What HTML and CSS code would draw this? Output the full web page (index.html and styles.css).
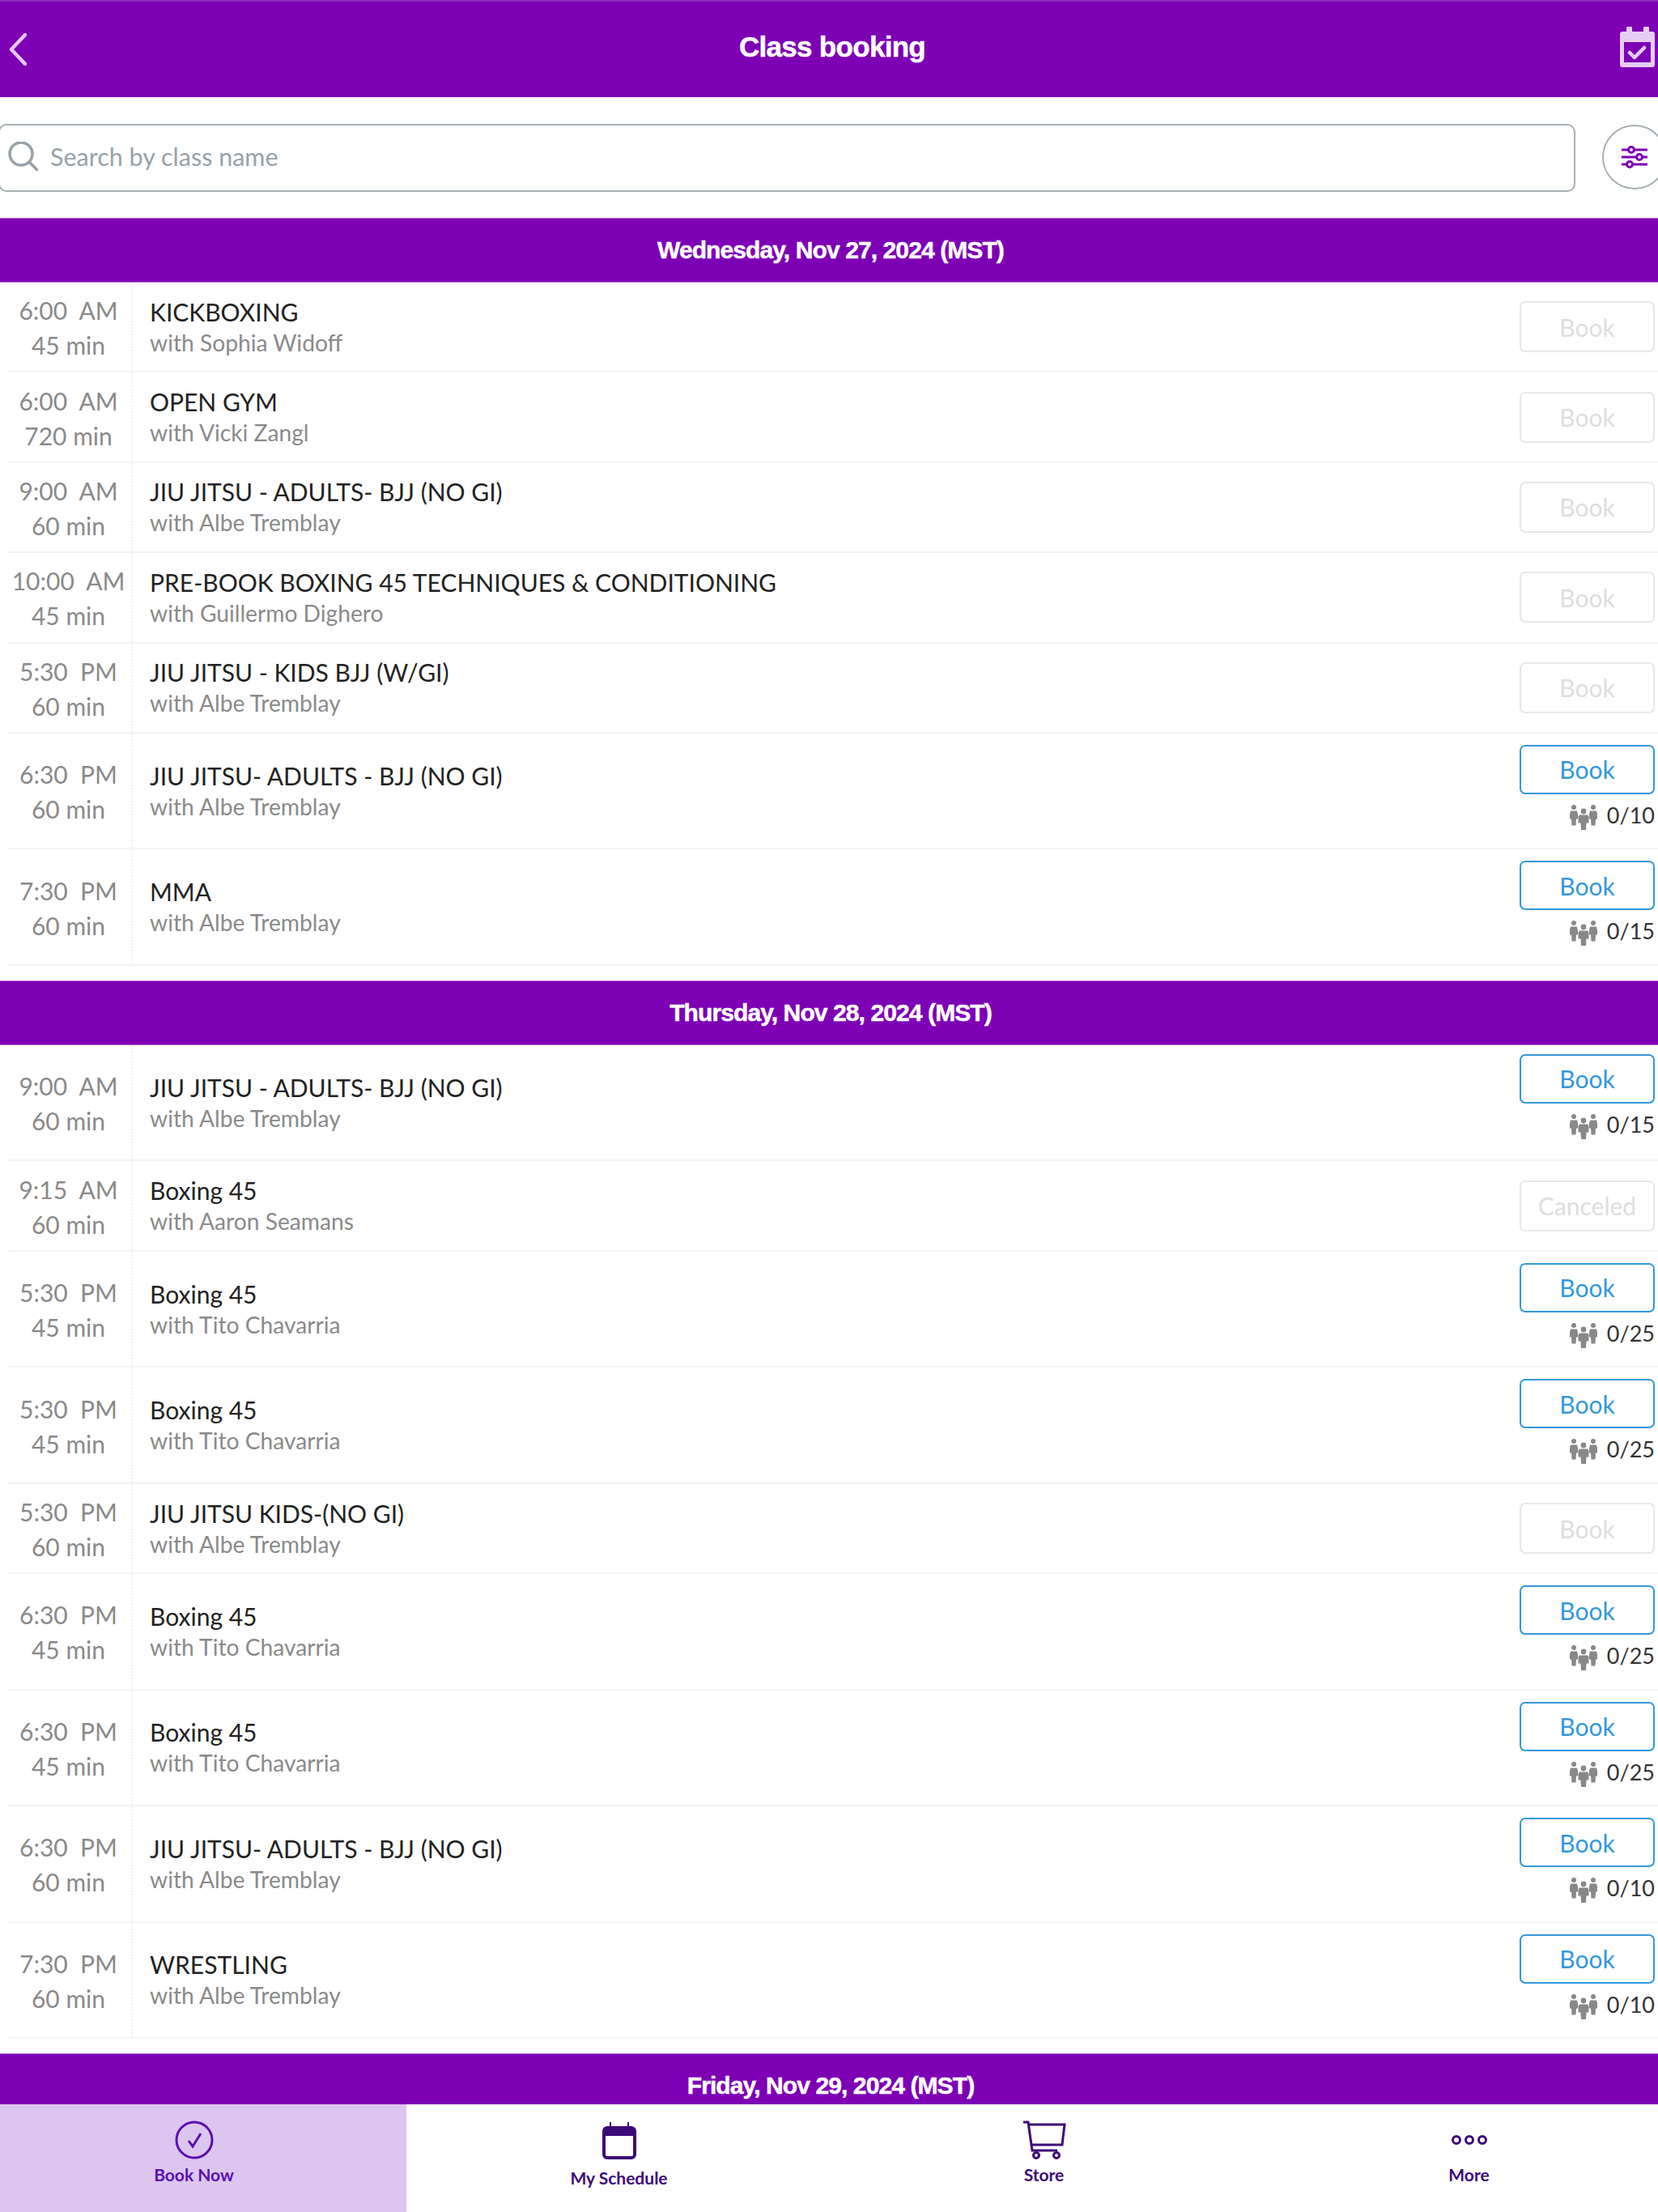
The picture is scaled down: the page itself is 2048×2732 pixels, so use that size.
FILE: index.html
```html
<!DOCTYPE html>
<html lang="en">
<head>
    <meta charset="UTF-8">
    <title>Class booking</title>
    <link rel="stylesheet" href="styles.css">
</head>
<body>
<svg class="defs" width="0" height="0">
    <symbol id="people" viewBox="0 0 34 31">
        <circle cx="5" cy="3" r="3"/><circle cx="29" cy="3" r="3"/><circle cx="17" cy="8" r="3.4"/>
        <path d="M1 7.500h8l1 4v6H8l-.5 8h-5l-.5-8H0v-6z"/>
        <path d="M25 7.500h8l1 4v6h-2l-.5 8h-5l-.5-8h-2v-6z"/>
        <path d="M12 12.500h10l1.500 2v8h-3L20 31h-6l-.5-8.500h-3v-8z"/>
    </symbol>
</svg>

<header class="topbar">
    <svg class="back-icon" width="22" height="40" viewBox="0 0 22 40"><path d="M20 2 3 20l17 18"/></svg>
    <h1>Class booking</h1>
    <svg class="cal-check" width="44" height="50" viewBox="0 0 44 50">
        <path fill-rule="evenodd" d="M9 0h5a1 1 0 0 1 1 1v5h14V1a1 1 0 0 1 1-1h5a1 1 0 0 1 1 1v5h4a3 3 0 0 1 3 3v38a3 3 0 0 1-3 3H3a3 3 0 0 1-3-3V9a3 3 0 0 1 3-3h5V1a1 1 0 0 1 1-1zM5 19v25h33V19z"/>
        <path class="tick" d="m12 32 6 6 12-12"/>
    </svg>
</header>

<div class="search-row">
    <div class="search-box">
        <svg width="38" height="36" viewBox="0 0 38 36"><circle cx="17" cy="15" r="14"/><path d="m27 25 10 10"/></svg>
        <span>Search by class name</span>
    </div>
    <div class="filter-btn">
        <svg width="32" height="28" viewBox="0 0 32 28">
            <path d="M0 5h8m8 0h16M0 14h18m8 0h6M0 23h6m8 0h18"/>
            <circle cx="12" cy="5" r="3.500"/><circle cx="22" cy="14" r="3.500"/><circle cx="10" cy="23" r="3.500"/>
        </svg>
    </div>
</div>

<main class="list">
    <h2 class="day">Wednesday, Nov 27, 2024 (MST)</h2>

    <div class="row">
        <div class="time"><span>6:00&nbsp; AM</span><span>45 min</span></div>
        <div class="info"><div class="name">KICKBOXING</div><div class="coach">with Sophia Widoff</div></div>
        <div class="action"><span class="btn off">Book</span></div>
    </div>
    <div class="row">
        <div class="time"><span>6:00&nbsp; AM</span><span>720 min</span></div>
        <div class="info"><div class="name">OPEN GYM</div><div class="coach">with Vicki Zangl</div></div>
        <div class="action"><span class="btn off">Book</span></div>
    </div>
    <div class="row">
        <div class="time"><span>9:00&nbsp; AM</span><span>60 min</span></div>
        <div class="info"><div class="name">JIU JITSU - ADULTS- BJJ (NO GI)</div><div class="coach">with Albe Tremblay</div></div>
        <div class="action"><span class="btn off">Book</span></div>
    </div>
    <div class="row">
        <div class="time"><span>10:00&nbsp; AM</span><span>45 min</span></div>
        <div class="info"><div class="name">PRE-BOOK BOXING 45 TECHNIQUES &amp; CONDITIONING</div><div class="coach">with Guillermo Dighero</div></div>
        <div class="action"><span class="btn off">Book</span></div>
    </div>
    <div class="row">
        <div class="time"><span>5:30&nbsp; PM</span><span>60 min</span></div>
        <div class="info"><div class="name">JIU JITSU - KIDS BJJ (W/GI)</div><div class="coach">with Albe Tremblay</div></div>
        <div class="action"><span class="btn off">Book</span></div>
    </div>
    <div class="row tall">
        <div class="time"><span>6:30&nbsp; PM</span><span>60 min</span></div>
        <div class="info"><div class="name">JIU JITSU- ADULTS - BJJ (NO GI)</div><div class="coach">with Albe Tremblay</div></div>
        <div class="action"><span class="btn">Book</span><div class="spots"><svg width="34" height="31"><use href="#people"/></svg>0/10</div></div>
    </div>
    <div class="row tall">
        <div class="time"><span>7:30&nbsp; PM</span><span>60 min</span></div>
        <div class="info"><div class="name">MMA</div><div class="coach">with Albe Tremblay</div></div>
        <div class="action"><span class="btn">Book</span><div class="spots"><svg width="34" height="31"><use href="#people"/></svg>0/15</div></div>
    </div>

    <h2 class="day">Thursday, Nov 28, 2024 (MST)</h2>

    <div class="row tall">
        <div class="time"><span>9:00&nbsp; AM</span><span>60 min</span></div>
        <div class="info"><div class="name">JIU JITSU - ADULTS- BJJ (NO GI)</div><div class="coach">with Albe Tremblay</div></div>
        <div class="action"><span class="btn">Book</span><div class="spots"><svg width="34" height="31"><use href="#people"/></svg>0/15</div></div>
    </div>
    <div class="row">
        <div class="time"><span>9:15&nbsp; AM</span><span>60 min</span></div>
        <div class="info"><div class="name">Boxing 45</div><div class="coach">with Aaron Seamans</div></div>
        <div class="action"><span class="btn off">Canceled</span></div>
    </div>
    <div class="row tall">
        <div class="time"><span>5:30&nbsp; PM</span><span>45 min</span></div>
        <div class="info"><div class="name">Boxing 45</div><div class="coach">with Tito Chavarria</div></div>
        <div class="action"><span class="btn">Book</span><div class="spots"><svg width="34" height="31"><use href="#people"/></svg>0/25</div></div>
    </div>
    <div class="row tall">
        <div class="time"><span>5:30&nbsp; PM</span><span>45 min</span></div>
        <div class="info"><div class="name">Boxing 45</div><div class="coach">with Tito Chavarria</div></div>
        <div class="action"><span class="btn">Book</span><div class="spots"><svg width="34" height="31"><use href="#people"/></svg>0/25</div></div>
    </div>
    <div class="row">
        <div class="time"><span>5:30&nbsp; PM</span><span>60 min</span></div>
        <div class="info"><div class="name">JIU JITSU KIDS-(NO GI)</div><div class="coach">with Albe Tremblay</div></div>
        <div class="action"><span class="btn off">Book</span></div>
    </div>
    <div class="row tall">
        <div class="time"><span>6:30&nbsp; PM</span><span>45 min</span></div>
        <div class="info"><div class="name">Boxing 45</div><div class="coach">with Tito Chavarria</div></div>
        <div class="action"><span class="btn">Book</span><div class="spots"><svg width="34" height="31"><use href="#people"/></svg>0/25</div></div>
    </div>
    <div class="row tall">
        <div class="time"><span>6:30&nbsp; PM</span><span>45 min</span></div>
        <div class="info"><div class="name">Boxing 45</div><div class="coach">with Tito Chavarria</div></div>
        <div class="action"><span class="btn">Book</span><div class="spots"><svg width="34" height="31"><use href="#people"/></svg>0/25</div></div>
    </div>
    <div class="row tall">
        <div class="time"><span>6:30&nbsp; PM</span><span>60 min</span></div>
        <div class="info"><div class="name">JIU JITSU- ADULTS - BJJ (NO GI)</div><div class="coach">with Albe Tremblay</div></div>
        <div class="action"><span class="btn">Book</span><div class="spots"><svg width="34" height="31"><use href="#people"/></svg>0/10</div></div>
    </div>
    <div class="row tall">
        <div class="time"><span>7:30&nbsp; PM</span><span>60 min</span></div>
        <div class="info"><div class="name">WRESTLING</div><div class="coach">with Albe Tremblay</div></div>
        <div class="action"><span class="btn">Book</span><div class="spots"><svg width="34" height="31"><use href="#people"/></svg>0/10</div></div>
    </div>

    <h2 class="day">Friday, Nov 29, 2024 (MST)</h2>
</main>

<nav class="tabs">
    <div class="tab active">
        <svg width="48" height="48" viewBox="0 0 48 48"><circle cx="24" cy="24" r="22"/><path d="m17 25 5 7 10-16"/></svg>
        <span>Book Now</span>
    </div>
    <div class="tab schedule">
        <svg width="42" height="46" viewBox="0 0 42 46">
            <path class="solid" d="M9 0h2v5h20V0h2v5h3a6 6 0 0 1 6 6v29a6 6 0 0 1-6 6H6a6 6 0 0 1-6-6V11a6 6 0 0 1 6-6h3zM4 17v23a2 2 0 0 0 2 2h30a2 2 0 0 0 2-2V17z"/>
        </svg>
        <span>My Schedule</span>
    </div>
    <div class="tab">
        <svg width="54" height="48" viewBox="0 0 54 48">
            <path d="M1 2h6l5 35h31M8 5h44l-3 25H11"/>
            <circle cx="17" cy="43" r="3.500"/><circle cx="42" cy="43" r="3.500"/>
        </svg>
        <span>Store</span>
    </div>
    <div class="tab">
        <svg width="46" height="48" viewBox="0 0 46 48">
            <circle cx="7" cy="24" r="4.500"/><circle cx="23" cy="24" r="4.500"/><circle cx="39" cy="24" r="4.500"/>
        </svg>
        <span>More</span>
    </div>
</nav>
</body>
</html>
```

FILE: styles.css
```css
* {
    box-sizing: border-box;
}

body {
    margin: 0;
    height: 2732px;
    display: flex;
    flex-direction: column;
    overflow: hidden;
    background-color: #fff;
    font-family: "Lato", "Noto Sans", sans-serif;
    color: #222;
}

.defs {
    position: absolute;
}

/* top bar */
.topbar {
    flex: none;
    height: 120px;
    padding: 0 3px 0 11px;
    display: grid;
    grid-template-columns: 1fr auto 1fr;
    align-items: center;
    background-color: #7d00b5;
    border-top: 2px solid #8f2cc2;
}

.topbar h1 {
    margin: 0 0 6px;
    font-family: "Liberation Sans", Arial, sans-serif;
    font-size: 35px;
    letter-spacing: -0.7px;
    -webkit-text-stroke: 0.5px #fff;
    font-weight: bold;
    color: #fff;
}

.back-icon path {
    fill: none;
    stroke: #e6c8f8;
    stroke-width: 4.500;
    stroke-linecap: round;
    stroke-linejoin: round;
}

.cal-check {
    justify-self: end;
    margin-bottom: 6px;
    fill: #e6cdf6;
}

.cal-check .tick {
    fill: none;
    stroke: #e6cdf6;
    stroke-width: 4.500;
    stroke-linecap: round;
    stroke-linejoin: round;
}

/* search */
.search-row {
    flex: none;
    height: 149px;
    padding-top: 33px;
    display: flex;
    gap: 33px;
    overflow: hidden;
}

.search-box {
    width: 1948px;
    height: 84px;
    margin-left: -2px;
    padding: 0 0 4px 9px;
    display: flex;
    align-items: center;
    gap: 15px;
    flex: none;
    border: 2px solid #a8b0b5;
    border-radius: 10px;
    font-size: 30.500px;
    color: #98a2a8;
}

.search-box svg {
    fill: none;
    stroke: #98a2a8;
    stroke-width: 3.500;
    stroke-linecap: round;
}

.filter-btn {
    width: 80px;
    height: 80px;
    margin-top: 1px;
    flex: none;
    display: flex;
    align-items: center;
    justify-content: center;
    border: 2px solid #a8b0b5;
    border-radius: 50%;
}

.filter-btn svg {
    fill: none;
    stroke: #7d00b5;
    stroke-width: 3;
}

/* class list */
.list {
    flex: 1;
    overflow: hidden;
}

.day {
    height: 80px;
    margin: 0;
    padding-left: 4px;
    display: flex;
    align-items: center;
    justify-content: center;
    background-color: #7d00b5;
    border-top: 1px solid #b56fd8;
    border-bottom: 1px solid #b56fd8;
    font-family: "Liberation Sans", Arial, sans-serif;
    font-size: 30px;
    letter-spacing: -0.9px;
    -webkit-text-stroke: 0.5px #fff;
    font-weight: bold;
    color: #fff;
}

.row {
    height: 111.400px;
    margin-left: 9px;
    display: flex;
    align-items: stretch;
    border-bottom: 2px solid #f2f3f4;
}

.row.tall {
    height: 143.500px;
}

.row + .day {
    margin-top: 18px;
}

.time {
    width: 155px;
    padding: 3px 2px 0 0;
    flex: none;
    display: flex;
    flex-direction: column;
    justify-content: center;
    text-align: center;
    font-size: 30px;
    line-height: 43px;
    color: #8a8a8a;
    border-right: 2px dotted #f0f2f3;
    white-space: nowrap;
}

.info {
    flex: 1;
    padding: 0 0 2px 21px;
    display: flex;
    flex-direction: column;
    justify-content: center;
}

.name {
    font-size: 30px;
    line-height: 40px;
    color: #222;
}

.coach {
    font-size: 28.200px;
    line-height: 36px;
    color: #8a8a8a;
}

.action {
    width: 167px;
    margin-right: 4px;
    flex: none;
    display: flex;
    flex-direction: column;
    justify-content: center;
    align-items: flex-end;
}

.tall .action {
    justify-content: flex-start;
    padding-top: 14px;
}

.day + .tall .action {
    padding-top: 11px;
}

.btn {
    width: 167px;
    height: 61px;
    display: flex;
    align-items: center;
    justify-content: center;
    border: 2px solid #3498db;
    border-radius: 7px;
    font-size: 30px;
    color: #3498db;
}

.btn.off {
    height: 63px;
    border-color: #e8e8e8;
    color: #dedede;
}

.spots {
    margin-top: 7px;
    display: flex;
    align-items: center;
    gap: 12px;
    font-size: 27px;
    line-height: 38px;
    color: #333;
}

.spots svg {
    fill: #888;
    margin-top: 5px;
}

/* bottom tabs, they run a little past both screen edges */
.tabs {
    flex: none;
    height: 133px;
    margin: 0 -29px 0 -23px;
    display: grid;
    grid-template-columns: repeat(4, 525px);
    background-color: #fff;
    position: relative;
}

.tab {
    padding-top: 20px;
    display: flex;
    flex-direction: column;
    align-items: center;
    gap: 6px;
    font-family: "Lato", "Noto Sans", sans-serif;
    font-size: 21px;
    font-weight: bold;
    color: #3c0a78;
}

.tab svg {
    fill: none;
    stroke: #3c0a78;
    stroke-width: 3;
}

.tab .solid {
    fill: #3c0a78;
    stroke: none;
}

.tab.schedule {
    padding-top: 22px;
    gap: 10px;
}

.tab.active {
    background-color: #dcc6f0;
    color: #5a0fb0;
}

.tab.active svg {
    stroke: #5a0fb0;
}
```
